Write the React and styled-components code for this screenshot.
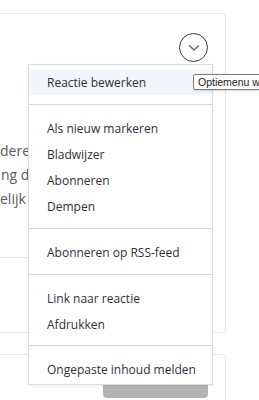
import React from "react";
import styled, { createGlobalStyle } from "styled-components";

const Global = createGlobalStyle`
  html, body { margin: 0; padding: 0; background: #ffffff; }
  body { font-family: "Open Sans", "Liberation Sans", sans-serif; overflow: hidden; }
  * { box-sizing: border-box; }
`;

const Page = styled.div`
  position: relative;
  width: 259px;
  height: 400px;
  padding-top: 13px;
  overflow: hidden;
`;

const Card = styled.div`
  width: 226px;
  height: ${(p) => p.$h}px;
  margin-top: ${(p) => p.$mt || 0}px;
  border: 1px solid #e3e9ef;
  border-left: none;
  border-radius: 0 4px 4px 0;
  display: flex;
  flex-direction: column;
`;

const Header = styled.div`
  display: flex;
  justify-content: flex-end;
  padding: 19px 17px 0 0;
  height: 78px;
`;

const CircleButton = styled.div`
  width: 29px;
  height: 29px;
  border: 1.5px solid #3a3a3a;
  border-radius: 50%;
  display: flex;
  align-items: center;
  justify-content: center;
`;

const Body = styled.div`
  padding-top: 47px;
  height: 166px;
  width: 200px;
  border-bottom: 1px solid #e6e6e6;
  color: #5a5a5a;
  font-size: 14px;
  line-height: 24px;
`;

const Line = styled.div`
  white-space: nowrap;
  overflow: hidden;
  margin-left: ${(p) => p.$ml || 0}px;
`;

const Footer = styled.div`
  display: flex;
  justify-content: flex-end;
  padding: 8px 17px 0 0;
`;

const GrayButton = styled.div`
  width: 105px;
  height: 35px;
  padding-bottom: 8px;
  background: #b3b3b3;
  border-radius: 4px;
  color: #ffffff;
  font-size: 14px;
  font-weight: 600;
  display: flex;
  align-items: center;
  justify-content: center;
`;

const Menu = styled.div`
  position: absolute;
  top: 64px;
  left: 28px;
  width: 185px;
  height: 321px;
  background: #ffffff;
  border: 1px solid #dcdcdc;
  box-shadow: 0 1px 3px rgba(0, 0, 0, 0.08);
  overflow: hidden;
`;

const Group = styled.div`
  padding: ${(p) => p.$pt}px 0 ${(p) => p.$pb}px;
  border-top: ${(p) => (p.$first ? "none" : "1px solid #d4d4d4")};
`;

const Item = styled.div`
  height: 26px;
  display: flex;
  align-items: center;
  padding-left: 18px;
  font-size: 12px;
  color: #2f2f35;
  white-space: nowrap;
  background: ${(p) => (p.$active ? "#f2f5f9" : "transparent")};
`;

const Tooltip = styled.div`
  position: absolute;
  top: 74px;
  left: 193px;
  height: 16px;
  padding: 0 4px;
  background: #ffffff;
  border: 1px solid #7a7a7a;
  border-radius: 2px;
  font-family: "Liberation Sans", Arial, sans-serif;
  font-size: 10.5px;
  line-height: 14px;
  color: #1a1a1a;
  white-space: nowrap;
  box-shadow: 1px 1px 2px rgba(0, 0, 0, 0.15);
`;

const Chevron = () => (
  <svg width="12" height="8" viewBox="0 0 12 8">
    <path d="M1.5 1.8 L6 6 L10.5 1.8" fill="none" stroke="#5c6b80" strokeWidth="1.4" strokeLinecap="round" strokeLinejoin="round" />
  </svg>
);

export default function App() {
  return (
    <>
      <Global />
      <Page>
        <Card $h={320}>
          <Header>
            <CircleButton>
              <Chevron />
            </CircleButton>
          </Header>
          <Body>
            <Line>dere reacties</Line>
            <Line $ml={1}>ng de discussie</Line>
            <Line>elijk aan</Line>
          </Body>
        </Card>
        <Card $h={80} $mt={21}>
          <Footer>
            <GrayButton>Reageren</GrayButton>
          </Footer>
        </Card>
        <Menu>
          <Group $first $pt={4} $pb={9}>
            <Item $active>Reactie bewerken</Item>
          </Group>
          <Group $pt={10} $pb={9}>
            <Item>Als nieuw markeren</Item>
            <Item>Bladwijzer</Item>
            <Item>Abonneren</Item>
            <Item>Dempen</Item>
          </Group>
          <Group $pt={10} $pb={9}>
            <Item>Abonneren op RSS-feed</Item>
          </Group>
          <Group $pt={10} $pb={8}>
            <Item>Link naar reactie</Item>
            <Item>Afdrukken</Item>
          </Group>
          <Group $pt={10} $pb={2}>
            <Item>Ongepaste inhoud melden</Item>
          </Group>
        </Menu>
        <Tooltip>Optiemenu weergeven</Tooltip>
      </Page>
    </>
  );
}
